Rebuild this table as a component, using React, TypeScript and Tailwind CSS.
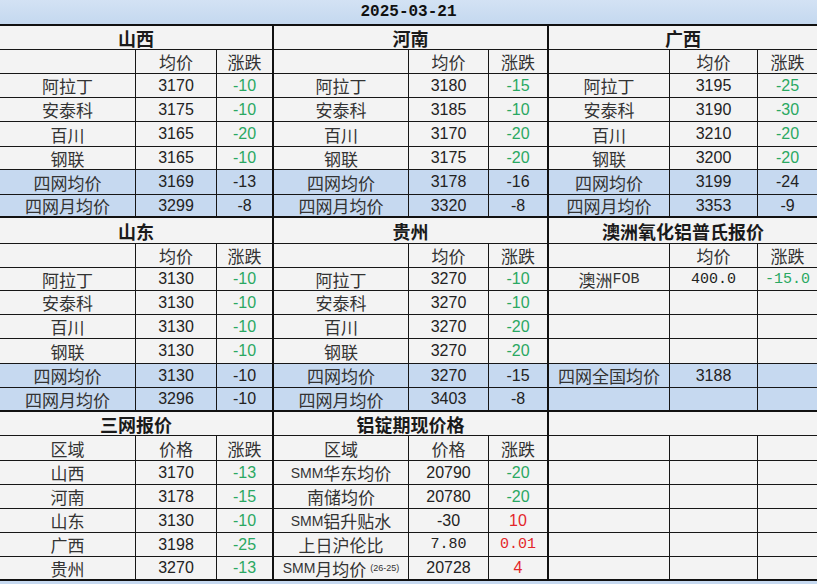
import React from "react";

type Cell = { t?: React.ReactNode; c?: string };
type Row =
  | { k: "head"; text?: string }
  | { k: "cells"; cells: Cell[]; blue?: boolean };

const SANS = "font-['Liberation_Sans','Noto_Sans_CJK_SC',sans-serif]";
const CJK = "font-['Noto_Sans_CJK_SC',sans-serif]";
const MONO = "font-['Liberation_Mono','Noto_Sans_CJK_SC',monospace]";

const LBL = `${CJK} text-[17px] text-[#333]`;
const NUM = `${SANS} text-[16px] text-[#222]`;
const GRN = `${SANS} text-[16px] text-[#2aa862]`;
const RED = `${SANS} text-[16px] text-[#e3262b]`;
const MNUM = `${MONO} text-[15px] text-[#222]`;
const MGRN = `${MONO} text-[15px] text-[#2aa862]`;
const MRED = `${MONO} text-[15px] text-[#e3262b]`;

const chg = (v: string): Cell => ({ t: v, c: GRN });
const blk = (v: string): Cell => ({ t: v, c: NUM });
const lbl = (v: React.ReactNode): Cell => ({ t: v, c: LBL });

const colHead = (a: string, b: string, c: string): Row => ({
  k: "cells",
  cells: [lbl(a), lbl(b), lbl(c)],
});

const region = (name: string, d: [string, string][]): Row[] => {
  const names = ["阿拉丁", "安泰科", "百川", "钢联"];
  return [
    { k: "head", text: name },
    colHead("", "均价", "涨跌"),
    ...names.map(
      (n, i): Row => ({ k: "cells", cells: [lbl(n), blk(d[i][0]), chg(d[i][1])] })
    ),
    { k: "cells", blue: true, cells: [lbl("四网均价"), blk(d[4][0]), blk(d[4][1])] },
    { k: "cells", blue: true, cells: [lbl("四网月均价"), blk(d[5][0]), blk(d[5][1])] },
  ];
};

const empty = (blue?: boolean): Row => ({ k: "cells", blue, cells: [{}, {}, {}] });

const W_LEFT = ["w-[136px]", "w-[81px]", "w-[55px]"];
const W_MID = ["w-[135px]", "w-[80px]", "w-[58px]"];
const W_RIGHT = ["w-[121px]", "w-[88px]", "w-[59px]"];

const H1 = ["h-[24px]", "h-[24px]", "h-[24px]", "h-[24px]", "h-[25px]", "h-[23px]", "h-[25px]", "h-[21px]"];
const H2 = ["h-[26px]", "h-[24px]", "h-[23px]", "h-[24px]", "h-[24px]", "h-[25px]", "h-[24px]", "h-[22px]"];
const H3 = ["h-[24px]", "h-[25px]", "h-[24px]", "h-[24px]", "h-[24px]", "h-[24px]", "h-[22px]"];

function Block({
  rows,
  widths,
  heights,
  outer,
}: {
  rows: Row[];
  widths: string[];
  heights: string[];
  outer: string;
}) {
  return (
    <div className={`flex flex-col ${outer}`}>
      {rows.map((r, i) => {
        const last = i === rows.length - 1;
        const base = `${heights[i]} flex shrink-0 ${last ? "" : "border-b border-[#161616]"}`;
        if (r.k === "head") {
          return (
            <div key={i} className={`${base} bg-[#f3f3f3] items-center justify-center`}>
              <span className={`${CJK} text-[18px] font-bold text-[#1a1a1a] leading-none`}>{r.text}</span>
            </div>
          );
        }
        return (
          <div key={i} className={`${base} ${r.blue ? "bg-[#c6d9f0]" : "bg-[#f3f3f3]"}`}>
            {r.cells.map((c, j) => (
              <div
                key={j}
                className={`${widths[j]} shrink-0 flex items-center justify-center whitespace-nowrap leading-none ${
                  j < 2 ? "border-r border-[#161616]" : ""
                } ${c.c ?? ""}`}
              >
                {c.t}
              </div>
            ))}
          </div>
        );
      })}
    </div>
  );
}

const SMM = <span className={`${SANS} text-[14px]`}>SMM</span>;

export default function App() {
  const shanxi = region("山西", [
    ["3170", "-10"], ["3175", "-10"], ["3165", "-20"], ["3165", "-10"], ["3169", "-13"], ["3299", "-8"],
  ]);
  const henan = region("河南", [
    ["3180", "-15"], ["3185", "-10"], ["3170", "-20"], ["3175", "-20"], ["3178", "-16"], ["3320", "-8"],
  ]);
  const guangxi = region("广西", [
    ["3195", "-25"], ["3190", "-30"], ["3210", "-20"], ["3200", "-20"], ["3199", "-24"], ["3353", "-9"],
  ]);
  const shandong = region("山东", [
    ["3130", "-10"], ["3130", "-10"], ["3130", "-10"], ["3130", "-10"], ["3130", "-10"], ["3296", "-10"],
  ]);
  const guizhou = region("贵州", [
    ["3270", "-10"], ["3270", "-10"], ["3270", "-20"], ["3270", "-20"], ["3270", "-15"], ["3403", "-8"],
  ]);
  const aus: Row[] = [
    { k: "head", text: "澳洲氧化铝普氏报价" },
    colHead("", "均价", "涨跌"),
    {
      k: "cells",
      cells: [
        lbl(<>澳洲<span className={`${MONO} text-[15px]`}>FOB</span></>),
        { t: "400.0", c: MNUM },
        { t: "-15.0", c: MGRN },
      ],
    },
    empty(),
    empty(),
    empty(),
    { k: "cells", blue: true, cells: [lbl("四网全国均价"), blk("3188"), {}] },
    empty(true),
  ];
  const sanwang: Row[] = [
    { k: "head", text: "三网报价" },
    colHead("区域", "价格", "涨跌"),
    { k: "cells", cells: [lbl("山西"), blk("3170"), chg("-13")] },
    { k: "cells", cells: [lbl("河南"), blk("3178"), chg("-15")] },
    { k: "cells", cells: [lbl("山东"), blk("3130"), chg("-10")] },
    { k: "cells", cells: [lbl("广西"), blk("3198"), chg("-25")] },
    { k: "cells", cells: [lbl("贵州"), blk("3270"), chg("-13")] },
  ];
  const lvding: Row[] = [
    { k: "head", text: "铝锭期现价格" },
    colHead("区域", "价格", "涨跌"),
    { k: "cells", cells: [lbl(<>{SMM}华东均价</>), blk("20790"), chg("-20")] },
    { k: "cells", cells: [lbl("南储均价"), blk("20780"), chg("-20")] },
    { k: "cells", cells: [lbl(<>{SMM}铝升贴水</>), blk("-30"), { t: "10", c: RED }] },
    { k: "cells", cells: [lbl("上日沪伦比"), { t: "7.80", c: MNUM }, { t: "0.01", c: MRED }] },
    {
      k: "cells",
      cells: [
        lbl(
          <>
            {SMM}月均价
            <span className={`${SANS} text-[9px] ml-[4px] text-[#333]`}>(26-25)</span>
          </>
        ),
        blk("20728"),
        { t: "4", c: RED },
      ],
    },
  ];
  const blank: Row[] = [{ k: "head" }, empty(), empty(), empty(), empty(), empty(), empty()];

  const L = "w-[274px] shrink-0 border-r-2 border-[#111]";
  const M = "w-[275px] shrink-0 border-r-2 border-[#111]";
  const R = "w-[268px] shrink-0";

  return (
    <div className="w-[817px] h-[584px] overflow-hidden bg-[#c6d9f0] flex flex-col">
      <div className="h-[24px] shrink-0 flex items-center justify-center bg-gradient-to-b from-[#d3e2f4] to-[#c4d8ef]">
        <span className={`${MONO} text-[16px] font-bold text-[#111] leading-none`}>2025-03-21</span>
      </div>
      <div className="flex shrink-0 border-t-2 border-b-2 border-[#111]">
        <Block rows={shanxi} widths={W_LEFT} heights={H1} outer={L} />
        <Block rows={henan} widths={W_MID} heights={H1} outer={M} />
        <Block rows={guangxi} widths={W_RIGHT} heights={H1} outer={R} />
      </div>
      <div className="flex shrink-0 border-b-2 border-[#111]">
        <Block rows={shandong} widths={W_LEFT} heights={H2} outer={L} />
        <Block rows={guizhou} widths={W_MID} heights={H2} outer={M} />
        <Block rows={aus} widths={W_RIGHT} heights={H2} outer={R} />
      </div>
      <div className="flex shrink-0 border-b-2 border-[#111]">
        <Block rows={sanwang} widths={W_LEFT} heights={H3} outer={L} />
        <Block rows={lvding} widths={W_MID} heights={H3} outer={M} />
        <Block rows={blank} widths={W_RIGHT} heights={H3} outer={R} />
      </div>
    </div>
  );
}
